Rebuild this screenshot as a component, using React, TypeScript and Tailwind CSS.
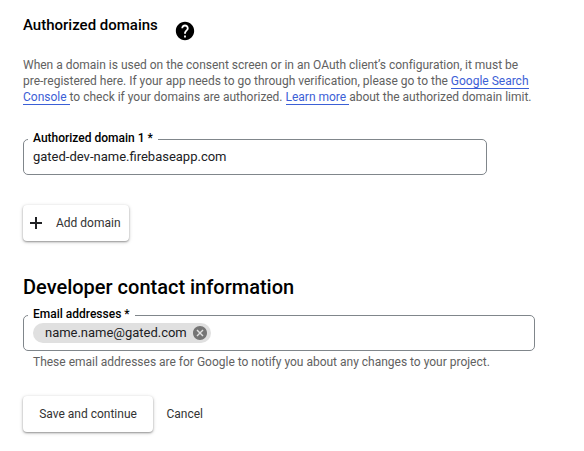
import React from "react";

function HelpIcon() {
  return (
    <svg viewBox="0 0 24 24" className="mt-[5px] ml-[16px] h-[22px] w-[22px]" fill="#000" aria-label="Help">
      <path d="M12 2C6.48 2 2 6.48 2 12s4.48 10 10 10 10-4.48 10-10S17.52 2 12 2zm1 17h-2v-2h2v2zm2.07-7.75l-.9.92C13.45 12.9 13 13.5 13 15h-2v-.5c0-1.1.45-2.1 1.17-2.83l1.24-1.26c.37-.36.59-.86.59-1.41 0-1.1-.9-2-2-2s-2 .9-2 2H8c0-2.21 1.79-4 4-4s4 1.79 4 4c0 .88-.36 1.68-.93 2.25z" />
    </svg>
  );
}

function CancelIcon() {
  return (
    <svg viewBox="2 2 20 20" className="h-[14px] w-[14px]" fill="#757575" aria-label="Remove">
      <path d="M12 2C6.47 2 2 6.47 2 12s4.47 10 10 10 10-4.47 10-10S17.53 2 12 2zm5 13.59L15.59 17 12 13.41 8.41 17 7 15.59 10.59 12 7 8.41 8.41 7 12 10.59 15.59 7 17 8.41 13.41 12 17 15.59z" />
    </svg>
  );
}

function TextLink({ children }: { children: React.ReactNode }) {
  return <a className="border-b border-[#3c60d6] text-[#3c60d6]">{children}</a>;
}

function Field({ label, width, children }: { label: string; width: string; children: React.ReactNode }) {
  return (
    <fieldset className={`h-[44px] rounded-[5px] border border-[#80868b] pl-[4px] ${width}`}>
      <legend className="h-4 px-[5px] text-[12px] leading-[14px] font-medium whitespace-nowrap text-black">{label}</legend>
      {children}
    </fieldset>
  );
}

const raised =
  "flex h-9 items-center rounded-[4px] bg-white shadow-[0_1px_2px_rgba(0,0,0,0.35),0_1px_4px_rgba(0,0,0,0.16)]";

export default function App() {
  return (
    <main className="flex h-[451px] w-[584px] flex-col items-start bg-white pl-[23px] font-[Roboto,sans-serif] text-[12px] leading-4 text-[#202124]">
      <header className="flex h-[57px] pt-[15px]">
        <h2 className="text-[15px] leading-5 font-medium whitespace-nowrap text-black">Authorized domains</h2>
        <HelpIcon />
      </header>
      <p className="tracking-[-0.006px] whitespace-nowrap text-[#616161]">
        When a domain is used on the consent screen or in an OAuth client’s configuration, it must be
        <br />
        pre-registered here. If your app needs to go through verification, please go to the{" "}
        <TextLink>Google Search</TextLink>
        <br />
        <TextLink>Console&nbsp;</TextLink>to check if your domains are authorized. <TextLink>Learn more&nbsp;</TextLink>
        about the authorized domain limit.
      </p>

      <div className="mt-[26px]">
        <Field label="Authorized domain 1 *" width="w-[464px]">
          <div className="pl-[5px] text-[13px] leading-5">gated-dev-name.firebaseapp.com</div>
        </Field>
      </div>
      <button className={`${raised} mt-[30px] w-[106px] pl-[7px] text-[#333]`}>
        <svg viewBox="0 0 12 12" className="h-3 w-3" fill="#202124">
          <path d="M5 0h2v5h5v2H7v5H5V7H0V5h5z" />
        </svg>
        <span className="ml-[14px] whitespace-nowrap">Add domain</span>
      </button>

      <h1 className="mt-[34px] text-[20px] leading-6 font-medium whitespace-nowrap text-black">
        Developer contact information
      </h1>
      <div className="mt-[8px]">
        <Field label="Email addresses *" width="w-[512px]">
          <div className="ml-[5px] flex h-5 w-[178px] items-center justify-between rounded-full bg-[#e0e0e0] pr-[4px] pl-3 text-[13px]">
            <span className="tracking-[-0.02px]">name.name@gated.com</span>
            <CancelIcon />
          </div>
        </Field>
      </div>
      <p className="mt-[3px] pl-[10px] tracking-[-0.006px] whitespace-nowrap text-[#616161]">
        These email addresses are for Google to notify you about any changes to your project.
      </p>
      <div className="mt-[26px] flex items-center text-[#333]">
        <button className={`${raised} w-[130px] justify-center whitespace-nowrap`}>Save and continue</button>
        <button className="ml-[13.5px]">Cancel</button>
      </div>
    </main>
  );
}
